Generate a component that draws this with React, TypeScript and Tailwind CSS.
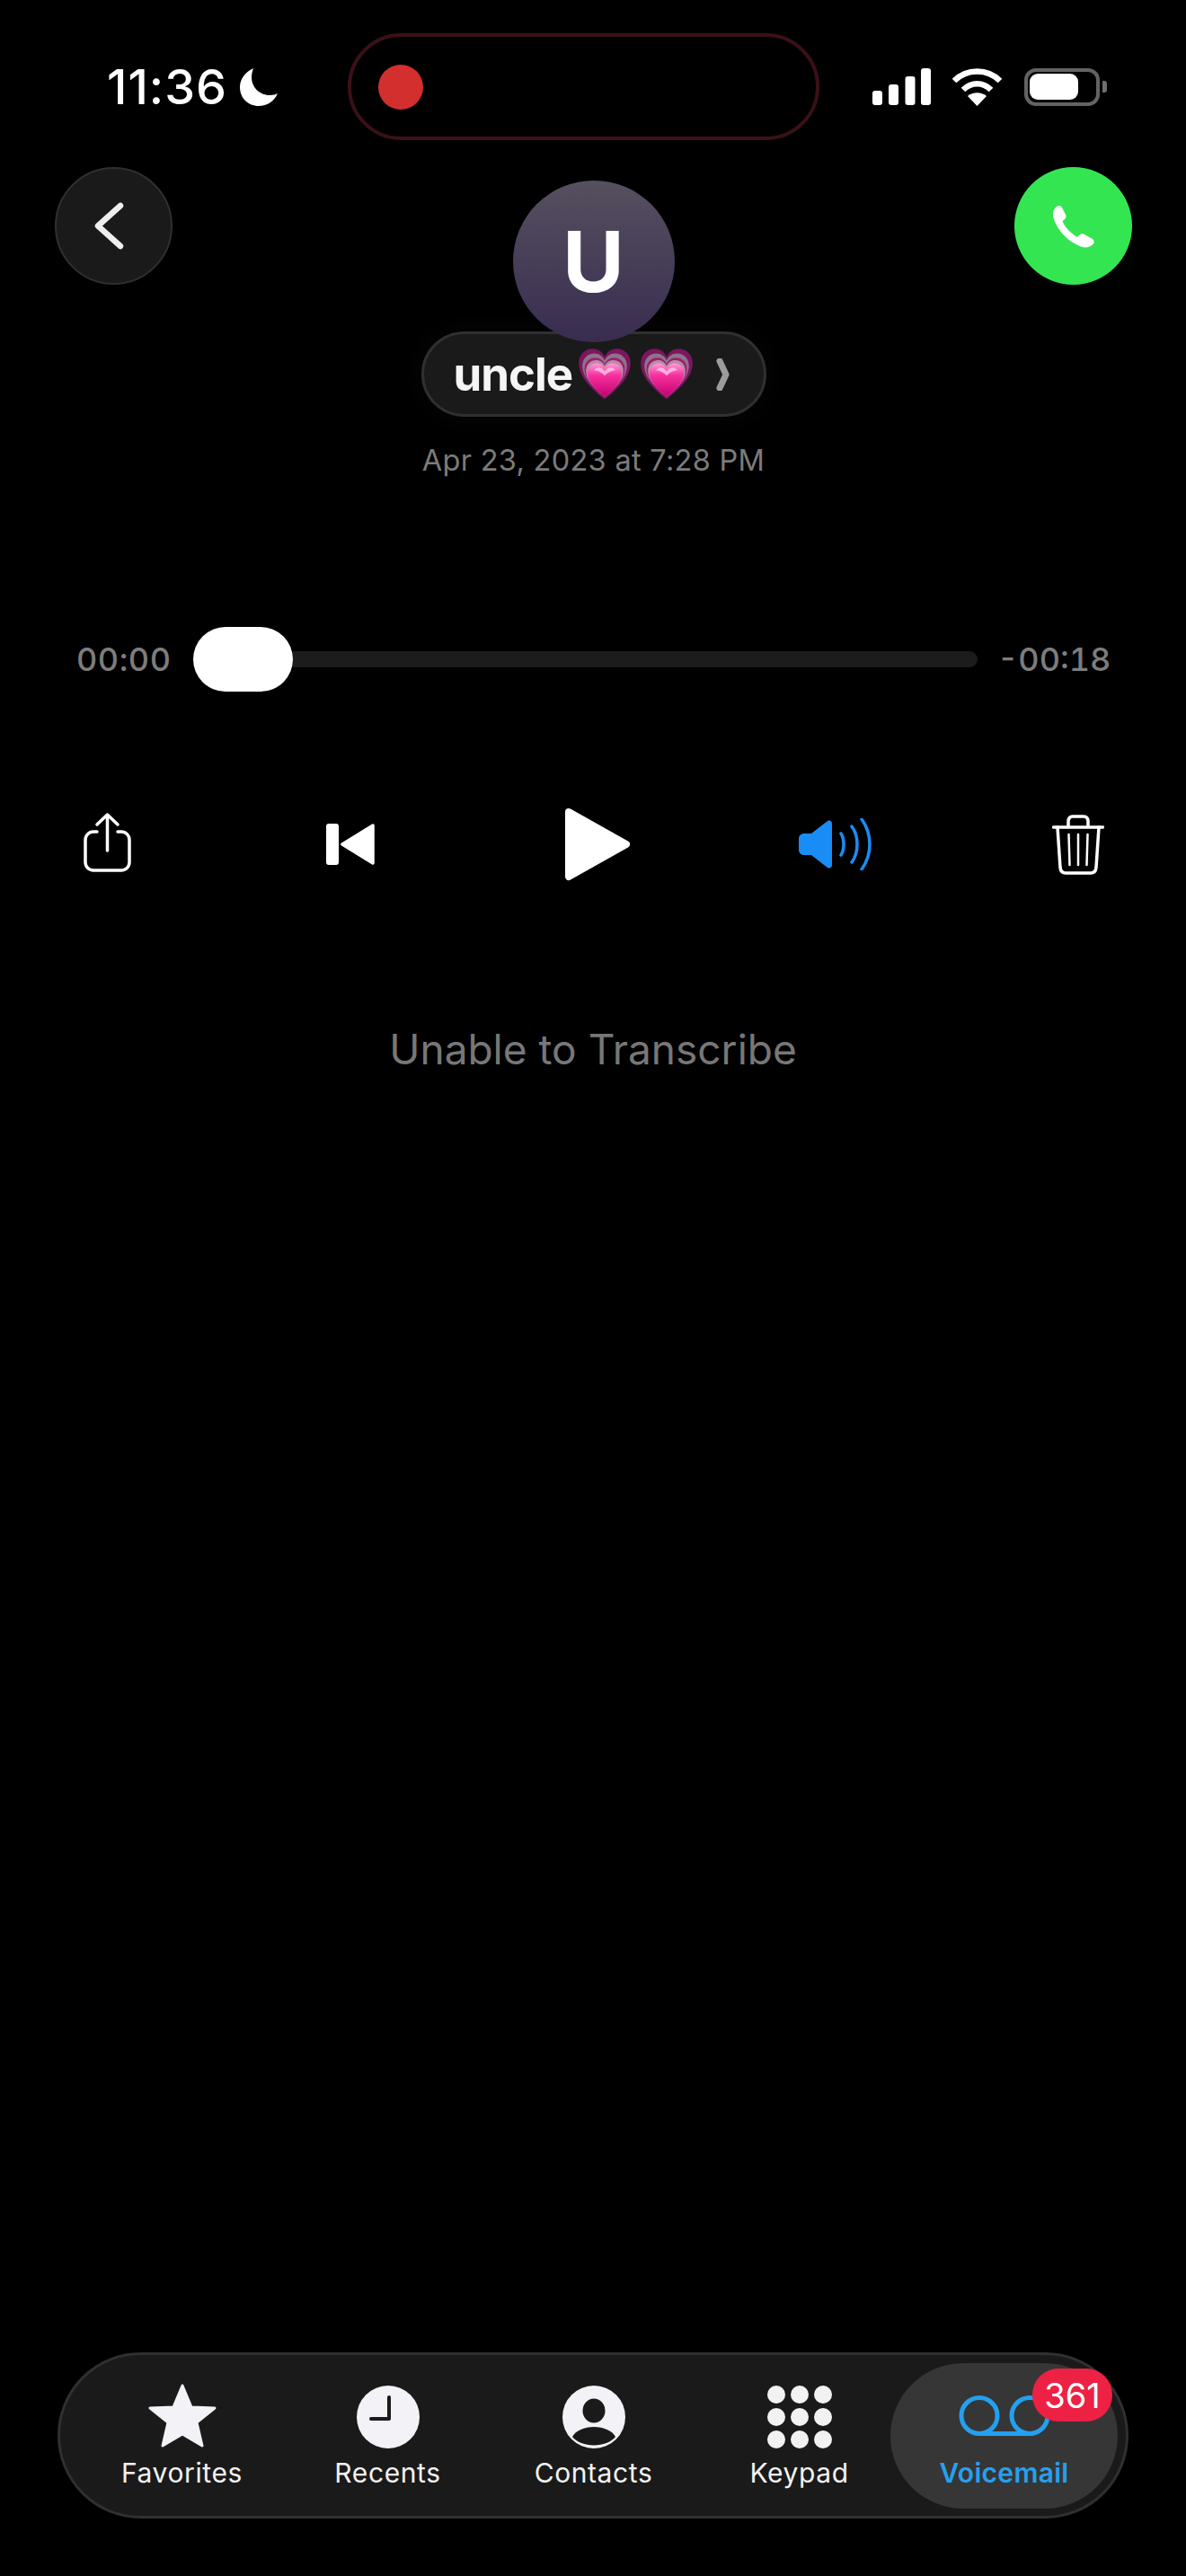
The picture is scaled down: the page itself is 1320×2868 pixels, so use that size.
import React from "react";

const HEART =
  "M50 96 C20 72 2 52 2 29 C2 12 14 2 28 2 C38 2 46 8 50 17 C54 8 62 2 72 2 C86 2 98 12 98 29 C98 52 80 72 50 96Z";

const Heart = ({ id, className }: { id: string; className: string }) => (
  <svg viewBox="0 0 100 100" className={className}>
    <defs>
      <linearGradient id={id} x1="0" y1="0" x2="0" y2="1">
        <stop offset="0" stopColor="#ff9ad8" />
        <stop offset="0.35" stopColor="#f7329f" />
        <stop offset="1" stopColor="#c3006f" />
      </linearGradient>
    </defs>
    <path d={HEART} fill="#7c1660" />
    <path d={HEART} fill="#8d7487" transform="translate(7 9) scale(0.86)" />
    <path d={HEART} fill="#a01c78" transform="translate(11 17) scale(0.78)" />
    <path d={HEART} fill="#b6909f" transform="translate(14 22) scale(0.72)" />
    <path d={HEART} fill={`url(#${id})`} transform="translate(17 28) scale(0.66)" />
    <path d="M30 42 C36 34 44 36 50 44 C56 36 64 34 70 42 C62 42 56 46 50 52 C44 46 38 42 30 42Z" fill="#ffd0ec" opacity="0.75" />
  </svg>
);

const StatusIcons = () => (
  <div className="flex items-center">
    <svg width="65" height="41" viewBox="0 0 65 41" fill="#fff">
      <rect x="0" y="25" width="11" height="16" rx="3" />
      <rect x="18" y="18" width="11" height="23" rx="3" />
      <rect x="36.500" y="9" width="11" height="32" rx="3" />
      <rect x="54" y="0" width="11" height="41" rx="3" />
    </svg>
    <svg width="57" height="42" viewBox="0 0 57 42" fill="none" className="ml-[23px]">
      <path d="M3 14 C17 0 40 0 54 14" stroke="#fff" strokeWidth="6.500" />
      <path d="M13 24 C22 15 35 15 44 24" stroke="#fff" strokeWidth="6.500" />
      <path d="M28.500 42 L18 31 C24 26 33 26 39 31Z" fill="#fff" />
    </svg>
    <div className="ml-[24px] box-border flex h-[42px] w-[84px] items-center rounded-[13px] border-[4px] border-[#636363] pl-[2px]">
      <div className="h-[29px] w-[54px] rounded-[9px] bg-white" />
    </div>
    <div className="ml-[3px] h-[13px] w-[5px] rounded-r-[3px] bg-[#6f6f6f]" />
  </div>
);

const tabs = [
  {
    label: "Favorites",
    icon: (
      <svg width="76" height="73" viewBox="0 0 76 73">
        <polygon
          points="38,3 48,27 74,28 54,44 60,70 38,57 16,70 22,44 2,28 28,27"
          fill="#f2f2f7"
          stroke="#f2f2f7"
          strokeWidth="3"
          strokeLinejoin="round"
        />
      </svg>
    ),
  },
  {
    label: "Recents",
    icon: (
      <svg width="70" height="70" viewBox="0 0 70 70">
        <circle cx="35" cy="35" r="35" fill="#f2f2f7" />
        <path d="M36 13 V37 H16" fill="none" stroke="#1a1a1a" strokeWidth="4" strokeLinecap="round" strokeLinejoin="round" />
      </svg>
    ),
  },
  {
    label: "Contacts",
    icon: (
      <svg width="70" height="70" viewBox="0 0 70 70">
        <circle cx="35" cy="35" r="35" fill="#f2f2f7" />
        <ellipse cx="35" cy="28" rx="12.500" ry="13.500" fill="#1a1a1a" />
        <path d="M11 57 C15 50 24 46 35 46 C46 46 55 50 59 57 C54 63 45 66.500 35 66.500 C25 66.500 16 63 11 57Z" fill="#1a1a1a" />
      </svg>
    ),
  },
  {
    label: "Keypad",
    icon: (
      <div className="grid grid-cols-[repeat(3,20px)] gap-x-[6px] gap-y-[5px]">
        {[1, 2, 3, 4, 5, 6, 7, 8, 9].map((n) => (
          <div key={n} className="size-[20px] rounded-full bg-[#f2f2f2]" />
        ))}
      </div>
    ),
  },
];

export default function App() {
  return (
    <div className="flex h-[2868px] w-[1320px] flex-col bg-black font-['Inter',sans-serif]">
      {/* status bar */}
      <div className="flex items-center pt-[37px]">
        <div className="flex w-[387px] items-center pl-[119px]">
          <span className="text-[54px] leading-[60px] font-medium tracking-[1px] text-white">11:36</span>
          <svg width="42" height="42" viewBox="0 0 42 42" fill="#fff" className="ml-[14px]">
            <path d="M15 0 C6 4 0 12 0 21 C0 33 9 42 21 42 C30 42 38 37 42 28 C40 29 37 30 33 30 C22 30 13 21 13 10 C13 6 14 3 15 0Z" />
          </svg>
        </div>
        <div className="box-border flex h-[119px] w-[525px] items-center rounded-full border-[4px] border-[#3a1118] pl-[30px]">
          <div className="size-[50px] rounded-full bg-[#d32f2f]" />
        </div>
        <div className="ml-[59px]">
          <StatusIcons />
        </div>
      </div>

      {/* header */}
      <div className="mt-[30px] flex items-start justify-between pr-[60px] pl-[61px]">
        <div className="box-border flex size-[131px] items-center justify-center rounded-full border-[2px] border-[#303030] bg-[#1a1a1a] pr-[10px]">
          <svg width="33" height="53" viewBox="0 0 33 53" fill="none">
            <path d="M29 4 L4 26.500 L29 49" stroke="#eeeeee" strokeWidth="6.500" strokeLinecap="round" strokeLinejoin="round" />
          </svg>
        </div>
        <div className="flex flex-col items-center pt-[15px]">
          <div className="relative z-10 flex size-[180px] items-center justify-center rounded-full bg-gradient-to-b from-[#56505f] to-[#392c50]">
            <span className="text-[94px] leading-none font-bold text-white">U</span>
          </div>
          <div className="mt-[-12px] box-border flex h-[95px] w-[384px] items-center rounded-full border-[3px] border-[#303030] bg-[#1a1a1a] pl-[33px] shadow-[0_0_30px_rgba(255,255,255,0.03)]">
            <span className="text-[51px] leading-none font-bold tracking-[-1px] text-[#f5f5f5]">uncle</span>
            <Heart id="heart-a" className="ml-[6px] h-[60px] w-[60px]" />
            <Heart id="heart-b" className="ml-[9px] h-[60px] w-[60px]" />
            <svg width="15" height="36" viewBox="0 0 15 36" fill="none" className="ml-[25px]">
              <path d="M4 3 L11 18 L4 33" stroke="#9c9c9c" strokeWidth="7" strokeLinecap="round" strokeLinejoin="round" />
            </svg>
          </div>
          <div className="mt-[29px] text-[32.500px] leading-[40px] tracking-[0.3px] text-[#7b7b7b]">Apr 23, 2023 at 7:28 PM</div>
        </div>
        <div className="flex size-[131px] items-center justify-center rounded-full bg-[#34e552]">
          <svg width="48" height="48" viewBox="0 0 48 48" fill="#fff">
            <path d="M5 2 C8 0 10 1 11.500 4 L15 11 C16 13 15.500 15 13.500 16.500 L11.500 18 C14 25 21 32 28 36 L30.500 33.500 C32.500 32 34.500 32 36 33 L44 37.500 C47 39 47.500 42 45.500 44 C42 47.500 37 48.500 32 46.500 C18 41 7 30 2 16 C0 10 1 5 5 2Z" />
          </svg>
        </div>
      </div>

      {/* scrubber */}
      <div className="mt-[165px] flex items-center pl-[85px]">
        <span className="w-[130px] text-[36px] leading-[44px] font-medium tracking-[0.5px] text-[#7d7d7d] tabular-nums">00:00</span>
        <div className="flex w-[873px] items-center">
          <div className="h-[72px] w-[111px] rounded-[36px] bg-white" />
          <div className="h-[18px] flex-1 rounded-r-full bg-[#1c1c1c]" />
        </div>
        <span className="ml-[22px] text-[36px] leading-[44px] font-medium text-[#7d7d7d] tabular-nums">-00:18</span>
      </div>

      {/* playback controls */}
      <div className="mt-[129px] flex items-center pl-[93px]">
        <svg width="53" height="67" viewBox="0 0 53 67" fill="none" stroke="#fff" strokeWidth="3.500" strokeLinecap="round" strokeLinejoin="round" className="mb-[5px]">
          <path d="M15 22 H11 A9 9 0 0 0 2 31 V56 A9 9 0 0 0 11 65 H42 A9 9 0 0 0 51 56 V31 A9 9 0 0 0 42 22 H38" />
          <path d="M26.500 43 V3 M15 14 L26.500 3 L38 14" />
        </svg>
        <svg width="54" height="46" viewBox="0 0 54 46" fill="#fff" className="ml-[217px]">
          <rect x="0" y="0" width="14" height="46" rx="3" />
          <polygon points="18,23 52,2 52,44" stroke="#fff" strokeWidth="3.500" strokeLinejoin="round" />
        </svg>
        <svg width="72" height="82" viewBox="0 0 72 82" fill="#fff" className="ml-[212px]">
          <polygon points="4,5 68,41 4,77" stroke="#fff" strokeWidth="8" strokeLinejoin="round" />
        </svg>
        <svg width="81" height="58" viewBox="0 0 81 58" fill="none" className="ml-[188px]">
          <path d="M6 17 H14 L32 3 C34.500 1.500 37 3 37 6 V52 C37 55 34.500 56.500 32 55 L14 41 H6 C2.500 41 0 38.500 0 35 V23 C0 19.500 2.500 17 6 17Z" fill="#1a8cf5" />
          <path d="M47 17 C51 23 51 35 47 41 M59 9 C67 20 67 38 59 49 M70 1 C82 18 82 40 70 57" stroke="#1a8cf5" strokeWidth="3.500" strokeLinecap="round" />
        </svg>
        <svg width="58" height="67" viewBox="0 0 58 67" fill="none" stroke="#fff" strokeWidth="3.500" strokeLinecap="round" strokeLinejoin="round" className="ml-[201px]">
          <path d="M1.500 14 H56.500" />
          <path d="M18 13 V8 C18 4 20 2 23 2 H35 C38 2 40 4 40 8 V13" />
          <path d="M6 14 L9 59 C9.500 63 11.500 65 15 65 H43 C46.500 65 48.500 63 49 59 L52 14" />
          <path d="M18.500 22 L19.500 56 M29 22 V56 M39.500 22 L38.500 56" strokeWidth="2.500" />
        </svg>
      </div>

      <div className="mt-[160px] text-center text-[46px] leading-[54px] text-[#777777]">Unable to Transcribe</div>

      <div className="flex-1" />

      {/* tab bar */}
      <div className="mx-[64px] mb-[64px] box-border flex h-[185px] items-start rounded-full border-[3px] border-[#303030] bg-[#1a1a1a] py-[9px] pl-[21px]">
        {tabs.map((tab) => (
          <div key={tab.label} className="flex h-[162px] w-[229px] flex-col items-center pt-[21px]">
            <div className="flex h-[74px] items-end">{tab.icon}</div>
            <span className="mt-[9px] text-[30px] leading-[36px] font-normal tracking-[0.6px] text-[#f2f2f2]">{tab.label}</span>
          </div>
        ))}
        <div className="relative ml-[-13px] flex h-[162px] w-[253px] flex-col items-center rounded-full bg-[#363636] pt-[21px]">
          <div className="flex h-[74px] items-center">
            <svg width="102" height="45" viewBox="0 0 102 45" fill="none" stroke="#23a0f0" strokeWidth="5">
              <circle cx="23" cy="22.500" r="20" />
              <circle cx="79" cy="22.500" r="20" />
              <path d="M23 42.500 H79" />
            </svg>
          </div>
          <span className="mt-[9px] text-[30px] leading-[36px] font-semibold tracking-[0.3px] text-[#26a0ee]">Voicemail</span>
          <div className="absolute top-[6px] left-[158px] flex h-[59px] w-[89px] items-center justify-center rounded-[29px] bg-[#ec2143] text-[38px] leading-none text-white">
            361
          </div>
        </div>
      </div>
    </div>
  );
}
